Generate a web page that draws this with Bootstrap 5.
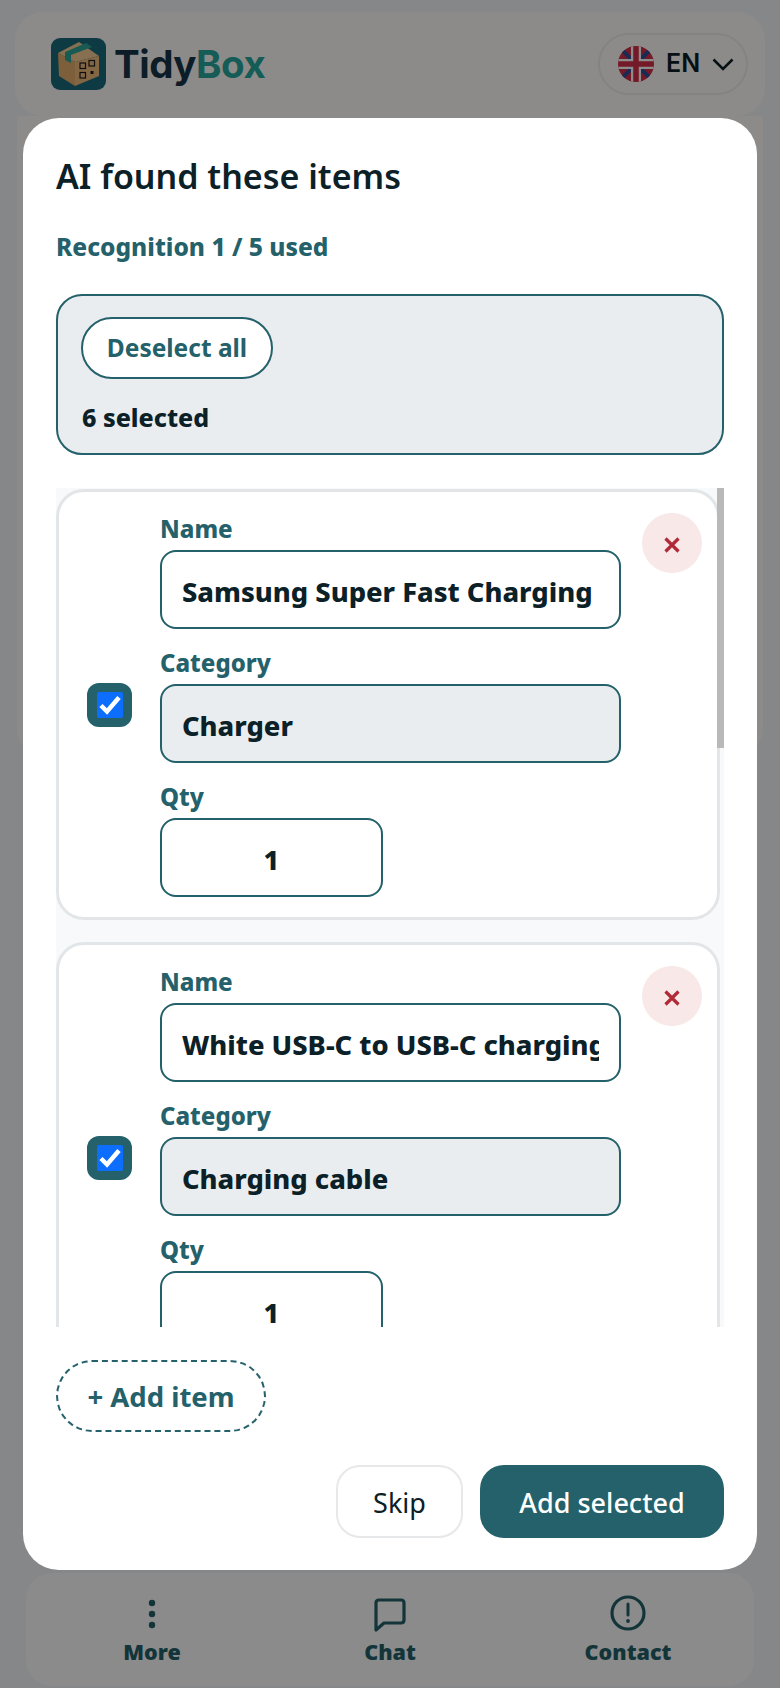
<!DOCTYPE html>
<html lang="en">
<head>
  <meta charset="UTF-8">
  <title>TidyBox</title>
  <meta name="viewport" content="width=device-width, initial-scale=1">
  <link href="https://cdn.jsdelivr.net/npm/bootstrap@5.3.3/dist/css/bootstrap.min.css" rel="stylesheet">
  <script src="https://cdn.jsdelivr.net/npm/bootstrap@5.3.3/dist/js/bootstrap.bundle.min.js"></script>
  <style>
    html, body { height: 100%; overflow: hidden; }
    body {
      font-family: "Noto Sans", "Open Sans", sans-serif;
      background: #f3f6f9;
      color: #0b2027;
    }

    /* page under the backdrop */
    .tb-page { height: 1688px; padding: 12px 15px 2px; }
    .tb-head {
      height: 104px;
      padding: 0 17px 0 36px;
      background: #fffefb;
      border-radius: 28px;
    }
    .tb-logo { width: 55px; height: 52px; }
    .tb-word { font-family: Inter, sans-serif; font-size: 38.5px; font-weight: 700; letter-spacing: -0.5px; line-height: 1; color: #17354a; }
    .tb-word span { color: #25a89c; }
    .tb-lang {
      width: 150px;
      height: 62px;
      padding-left: 18px;
      border: 2px solid #f0efec;
      border-radius: 31px;
      font-family: Inter, sans-serif;
      font-size: 25px;
      font-weight: 600;
    }
    .tb-flag { margin-right: 12px; }
    .tb-chev { margin-left: 12px; }
    .tb-behind {
      height: 640px;
      margin: 0 2px;
      background: #fffdfa;
      border-radius: 0 0 28px 28px;
    }
    .tb-foot {
      margin: 0 11px;
      height: 113px;
      padding-bottom: 4px;
      background: #fdfdfd;
      border-radius: 26px;
    }
    .tb-foot-item { width: 238px; font-size: 21.5px; font-weight: 900; line-height: 26px; color: #24616a; }
    .tb-foot-item svg { display: block; margin: 0 auto 3px; }

    .tb-backdrop { position: fixed; inset: 0; background: rgba(0, 0, 0, 0.45); }

    /* dialog */
    .tb-dialog {
      position: fixed;
      left: 23px;
      top: 118px;
      width: 734px;
      height: 1452px;
      padding: 33px 33px 32px;
      background: #fff;
      border-radius: 36px;
    }
    .tb-title { font-size: 34px; font-weight: 600; line-height: 50px; margin: 0 0 30px; }
    .tb-quota { font-size: 24.5px; font-weight: 800; color: #24616a; line-height: 32px; margin-bottom: 31px; }
    .tb-selbox {
      height: 161px;
      padding: 21px 23px;
      background: #e9edf0;
      border: 2px solid #24616a;
      border-radius: 26px;
      margin-bottom: 33px;
    }
    .tb-pill {
      width: 192px;
      height: 62px;
      padding: 0;
      background: #fff;
      border: 2px solid #24616a;
      border-radius: 31px;
      color: #24616a;
      font-size: 24.5px;
      font-weight: 700;
    }
    .tb-count { font-size: 25px; font-weight: 800; line-height: 32px; margin: 22px 0 0 1px; }

    .tb-list {
      height: 839px;
      overflow: hidden;
      position: relative;
      background: #f7f9fa;
    }
    .tb-thumb {
      position: absolute;
      right: 0;
      top: 0;
      width: 7px;
      height: 260px;
      background: #b9b9b9;
    }
    .tb-item {
      width: 664px;
      height: 431px;
      margin-top: 1px;
      margin-bottom: 22px;
      padding: 21px 15px 20px 28px;
      background: #fff;
      border: 3px solid #e3e6e8;
      border-radius: 28px;
    }
    .tb-check {
      width: 45px;
      height: 44px;
      margin-right: 28px;
      background: #24616a;
      border-radius: 12px;
      flex: none;
    }
    .tb-check .form-check-input {
      width: 26px;
      height: 26px;
      margin: 0;
      border: 0;
      border-radius: 2px;
    }
    .tb-check .form-check-input:checked[type=checkbox] {
      --bs-form-check-bg-image: url("data:image/svg+xml,%3csvg xmlns='http://www.w3.org/2000/svg' viewBox='0 0 26 26'%3e%3cpath fill='none' stroke='%23fff' stroke-width='4.5' d='M4 13.5l6 6L22 5.500'/%3e%3c/svg%3e");
    }
    .tb-fields { width: 461px; flex: none; }
    .tb-label { display: block; font-size: 24px; font-weight: 800; color: #24616a; line-height: 32px; margin-bottom: 5px; }
    .tb-input {
      height: 79px;
      padding: 3px 20px 0;
      border: 2px solid #24616a;
      border-radius: 16px;
      color: #0b2027;
      font-size: 27.3px;
      font-weight: 800;
      margin-bottom: 18px;
    }
    .tb-input[readonly] { background: #e9edf0; }
    .tb-qty { width: 223px; text-align: center; margin-bottom: 0; }
    .tb-del {
      width: 60px;
      height: 60px;
      margin-left: 21px;
      padding: 0;
      background: #f8e8e8;
      border: 0;
      border-radius: 50%;
      flex: none;
    }

    .tb-add {
      width: 210px;
      height: 72px;
      margin-top: 33px;
      padding: 2px 0 0;
      background: #fff;
      border: 2px dashed #24616a;
      border-radius: 36px;
      color: #24616a;
      font-size: 27.5px;
      font-weight: 700;
    }
    .tb-actions { margin-top: 33px; gap: 17px; }
    .tb-skip, .tb-save {
      height: 73px;
      padding: 3px 0 0;
      border-radius: 24px;
      font-size: 27px;
    }
    .tb-skip { width: 127px; background: #fff; border: 2px solid #e6e8ea; color: #0b2027; }
    .tb-save { width: 244px; background: #24616a; border: 0; color: #fff; font-weight: 500; }
  </style>
</head>
<body>

  <div class="tb-page d-flex flex-column">
    <header class="tb-head d-flex align-items-center justify-content-between">
      <div class="d-flex align-items-center gap-2">
        <svg class="tb-logo" viewBox="0 0 55 52">
          <rect width="55" height="52" rx="9" fill="#1a6b7a"/>
          <path d="M7 15 28 4 48 18 24 24Z" fill="#f6cc94"/>
          <path d="M7 15 24 24 24 48 8 38Z" fill="#e6ad6c"/>
          <path d="M24 24 48 18 48 38 24 48Z" fill="#efba7c"/>
          <path d="M14 14 35 5 41 9 20 17 20 25 14 22Z" fill="#2fa596"/>
          <g fill="none" stroke="#1d1d1d" stroke-width="1.2">
            <rect x="29" y="25" width="5.5" height="5.5"/>
            <rect x="38" y="22.5" width="5.5" height="5.5"/>
            <rect x="29" y="34.5" width="5.5" height="5.5"/>
          </g>
          <rect x="39.500" y="33" width="3" height="3" fill="#1d1d1d"/>
        </svg>
        <div class="tb-word">Tidy<span>Box</span></div>
      </div>
      <div class="tb-lang d-flex align-items-center">
        <svg class="tb-flag" width="36" height="36" viewBox="0 0 36 36">
          <defs><clipPath id="flagclip"><circle cx="18" cy="18" r="18"/></clipPath></defs>
          <g clip-path="url(#flagclip)">
            <rect width="36" height="36" fill="#d42e48"/>
            <path d="M0 0 36 36M36 0 0 36" stroke="#2f4f9c" stroke-width="4"/>
            <path d="M18 0V36M0 18H36" stroke="#fff" stroke-width="10"/>
            <path d="M18 0V36M0 18H36" stroke="#d42e48" stroke-width="5.500"/>
          </g>
        </svg>
        <span>EN</span>
        <svg class="tb-chev" width="22" height="13" viewBox="0 0 22 13"><path d="M1.500 1.500 11 11 20.500 1.500" fill="none" stroke="#0b2027" stroke-width="2.6"/></svg>
      </div>
    </header>

    <div class="tb-behind"></div>

    <nav class="tb-foot d-flex align-items-center justify-content-center text-center mt-auto">
      <div class="tb-foot-item">
        <svg width="30" height="46" viewBox="0 0 30 46"><g fill="#24616a"><circle cx="15" cy="13" r="3.2"/><circle cx="15" cy="24" r="3.2"/><circle cx="15" cy="35" r="3.2"/></g></svg>
        More
      </div>
      <div class="tb-foot-item">
        <svg width="34" height="46" viewBox="0 0 34 46"><path d="M6 10H28Q31 10 31 13V30Q31 33 28 33H11L3 40V13Q3 10 6 10Z" fill="none" stroke="#24616a" stroke-width="3.2" stroke-linejoin="round"/></svg>
        Chat
      </div>
      <div class="tb-foot-item">
        <svg width="38" height="46" viewBox="0 0 38 46"><circle cx="19" cy="23" r="16" fill="none" stroke="#24616a" stroke-width="3.2"/><path d="M19 14V25" stroke="#24616a" stroke-width="3" stroke-linecap="round"/><circle cx="19" cy="31" r="1.900" fill="#24616a"/></svg>
        Contact
      </div>
    </nav>
  </div>

  <div class="tb-backdrop"></div>

  <div class="tb-dialog">
    <h1 class="tb-title">AI found these items</h1>
    <div class="tb-quota">Recognition 1 / 5 used</div>

    <div class="tb-selbox">
      <button type="button" class="btn tb-pill">Deselect all</button>
      <div class="tb-count">6 selected</div>
    </div>

    <div class="tb-list">
      <div class="tb-thumb"></div>

      <div class="tb-item d-flex align-items-start">
        <div class="tb-check d-flex align-items-center justify-content-center align-self-center">
          <input class="form-check-input" type="checkbox" checked aria-label="Select">
        </div>
        <div class="tb-fields">
          <label class="tb-label">Name</label>
          <input class="form-control tb-input" value="Samsung Super Fast Charging Wall Adapter">
          <label class="tb-label">Category</label>
          <input class="form-control tb-input" value="Charger" readonly>
          <label class="tb-label">Qty</label>
          <input class="form-control tb-input tb-qty" value="1">
        </div>
        <button type="button" class="btn tb-del" aria-label="Remove">
          <svg width="18" height="18" viewBox="0 0 18 18"><path d="M2.500 2.500 15.500 15.500M15.500 2.500 2.500 15.500" stroke="#b02a37" stroke-width="3.200"/></svg>
        </button>
      </div>

      <div class="tb-item d-flex align-items-start">
        <div class="tb-check d-flex align-items-center justify-content-center align-self-center">
          <input class="form-check-input" type="checkbox" checked aria-label="Select">
        </div>
        <div class="tb-fields">
          <label class="tb-label">Name</label>
          <input class="form-control tb-input" value="White USB-C to USB-C charging cable">
          <label class="tb-label">Category</label>
          <input class="form-control tb-input" value="Charging cable" readonly>
          <label class="tb-label">Qty</label>
          <input class="form-control tb-input tb-qty" value="1">
        </div>
        <button type="button" class="btn tb-del" aria-label="Remove">
          <svg width="18" height="18" viewBox="0 0 18 18"><path d="M2.500 2.500 15.500 15.500M15.500 2.500 2.500 15.500" stroke="#b02a37" stroke-width="3.200"/></svg>
        </button>
      </div>
    </div>

    <button type="button" class="btn tb-add d-block">+ Add item</button>

    <div class="tb-actions d-flex justify-content-end">
      <button type="button" class="btn tb-skip">Skip</button>
      <button type="button" class="btn tb-save">Add selected</button>
    </div>
  </div>

</body>
</html>
